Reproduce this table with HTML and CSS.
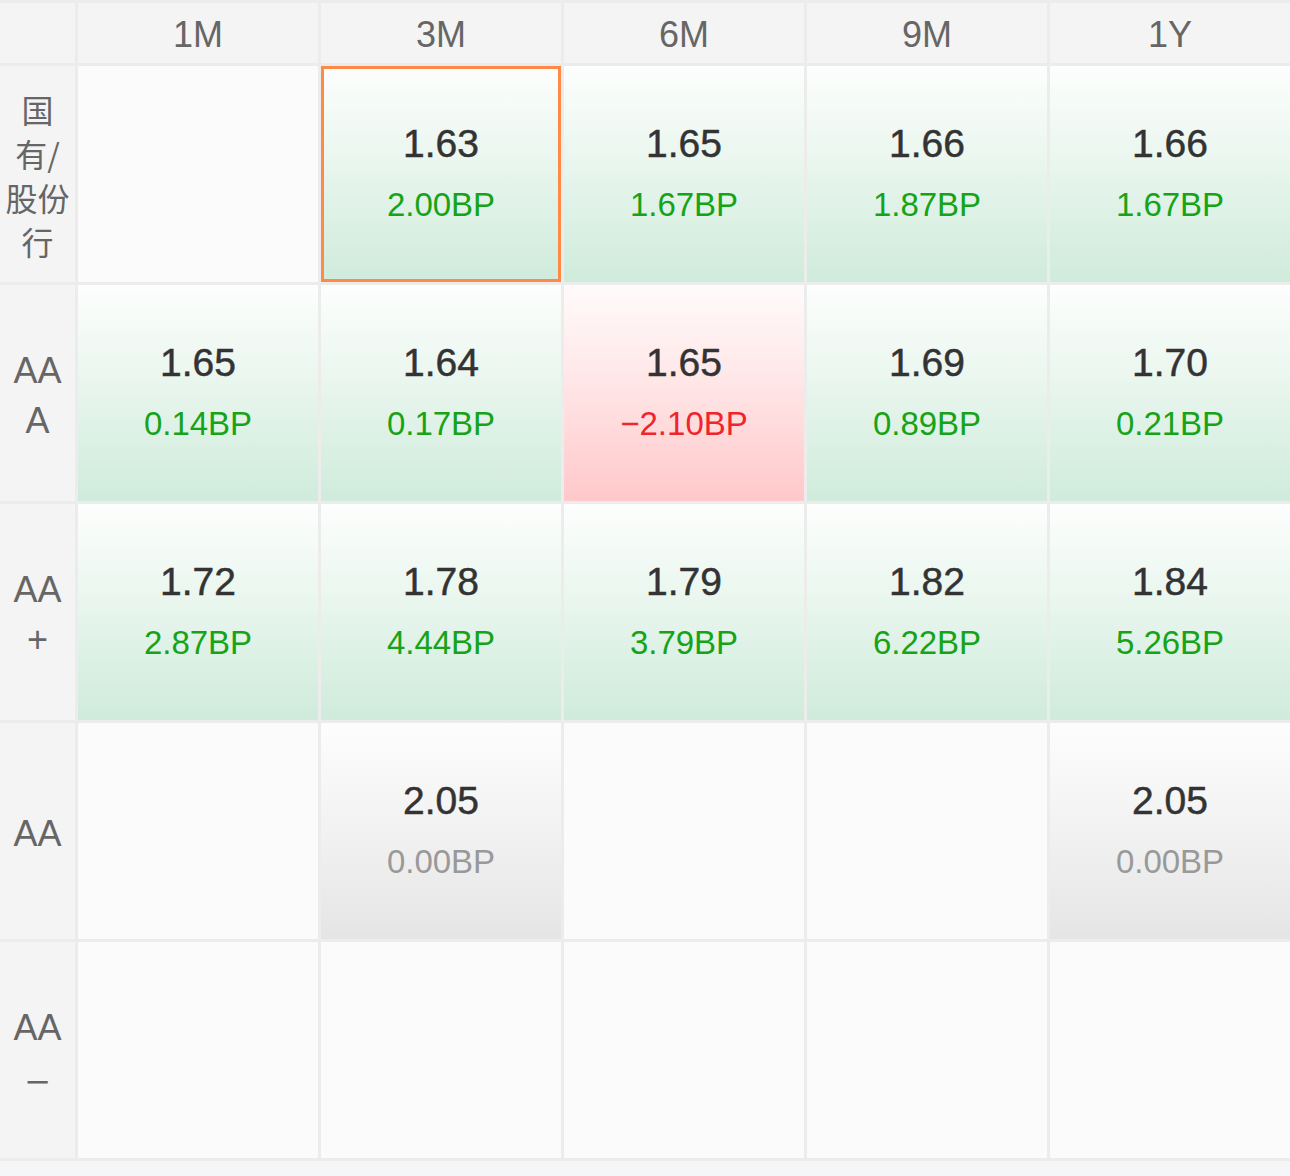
FILE: index.html
```html
<!DOCTYPE html>
<html lang="zh-CN">
<head>
<meta charset="utf-8">
<title>利率矩阵</title>
<link rel="stylesheet" href="styles.css">
</head>
<body>
<div class="matrix">
  <div class="corner"></div>
  <div class="colhead">1M</div>
  <div class="colhead">3M</div>
  <div class="colhead">6M</div>
  <div class="colhead">9M</div>
  <div class="colhead">1Y</div>

  <div class="rowhead cjk"><span class="lbl">国<br>有/<br>股份<br>行</span></div>
  <div class="cell empty"></div>
  <div class="cell up selected"><span class="val">1.63</span><span class="bp">2.00BP</span></div>
  <div class="cell up"><span class="val">1.65</span><span class="bp">1.67BP</span></div>
  <div class="cell up"><span class="val">1.66</span><span class="bp">1.87BP</span></div>
  <div class="cell up"><span class="val">1.66</span><span class="bp">1.67BP</span></div>

  <div class="rowhead"><span class="lbl">AA<br>A</span></div>
  <div class="cell up"><span class="val">1.65</span><span class="bp">0.14BP</span></div>
  <div class="cell up"><span class="val">1.64</span><span class="bp">0.17BP</span></div>
  <div class="cell down"><span class="val">1.65</span><span class="bp">−2.10BP</span></div>
  <div class="cell up"><span class="val">1.69</span><span class="bp">0.89BP</span></div>
  <div class="cell up"><span class="val">1.70</span><span class="bp">0.21BP</span></div>

  <div class="rowhead"><span class="lbl">AA<br>+</span></div>
  <div class="cell up"><span class="val">1.72</span><span class="bp">2.87BP</span></div>
  <div class="cell up"><span class="val">1.78</span><span class="bp">4.44BP</span></div>
  <div class="cell up"><span class="val">1.79</span><span class="bp">3.79BP</span></div>
  <div class="cell up"><span class="val">1.82</span><span class="bp">6.22BP</span></div>
  <div class="cell up"><span class="val">1.84</span><span class="bp">5.26BP</span></div>

  <div class="rowhead"><span class="lbl">AA</span></div>
  <div class="cell empty"></div>
  <div class="cell flat"><span class="val">2.05</span><span class="bp">0.00BP</span></div>
  <div class="cell empty"></div>
  <div class="cell empty"></div>
  <div class="cell flat"><span class="val">2.05</span><span class="bp">0.00BP</span></div>

  <div class="rowhead"><span class="lbl">AA<br><span class="minus">−</span></span></div>
  <div class="cell empty"></div>
  <div class="cell empty"></div>
  <div class="cell empty"></div>
  <div class="cell empty"></div>
  <div class="cell empty"></div>
</div>
<div class="footer"></div>
</body>
</html>
```

FILE: styles.css
```css
html, body {
  margin: 0;
  padding: 0;
  background: #f5f6f8;
}

body {
  font-family: "Liberation Sans", Arial, sans-serif;
  width: 1290px;
}

.matrix {
  display: grid;
  grid-template-columns: 75px repeat(5, 240px);
  grid-template-rows: 60px repeat(5, 216px);
  gap: 3px;
  padding: 3px 0;
  background: #ececec;
}

.corner,
.colhead,
.rowhead {
  background: #f4f4f4;
  color: #666;
  display: flex;
  align-items: center;
  justify-content: center;
  text-align: center;
  box-sizing: border-box;
}

.colhead {
  font-size: 36px;
  line-height: 56px;
  padding-top: 3px;
}

.rowhead {
  font-size: 36px;
  line-height: 50px;
  padding-top: 6px;
}

.lbl {
  display: block;
}

.rowhead .minus {
  display: inline-block;
  transform: translateY(4px) scaleX(1.15);
}

.rowhead.cjk {
  font-family: "Noto Sans CJK SC", "Noto Sans", sans-serif;
  font-size: 32px;
  line-height: 44px;
  padding-top: 1px;
}

.cell {
  display: flex;
  flex-direction: column;
  align-items: center;
  justify-content: center;
  box-sizing: border-box;
  background: #fbfbfb;
}

.cell.up {
  background: linear-gradient(to bottom, #fdfefd 0%, #e9f6ee 45%, #cfebdb 100%);
}

.cell.down {
  background: linear-gradient(to bottom, #fffbfb 0%, #ffe6e7 45%, #ffc8ca 100%);
}

.cell.flat {
  background: linear-gradient(to bottom, #fdfdfd 0%, #f3f3f3 45%, #e5e5e5 100%);
}

.cell.selected {
  box-shadow: inset 0 0 0 3px #ff8a45;
}

.val {
  font-size: 39px;
  line-height: 61px;
  color: #333;
  -webkit-text-stroke: 0.5px #333;
}

.bp {
  font-size: 33px;
  line-height: 61px;
  color: #17a317;
}

.down .bp {
  color: #f0242c;
}

.flat .bp {
  color: #999;
}

.footer {
  height: 15px;
  background: #f5f6f8;
}
```
